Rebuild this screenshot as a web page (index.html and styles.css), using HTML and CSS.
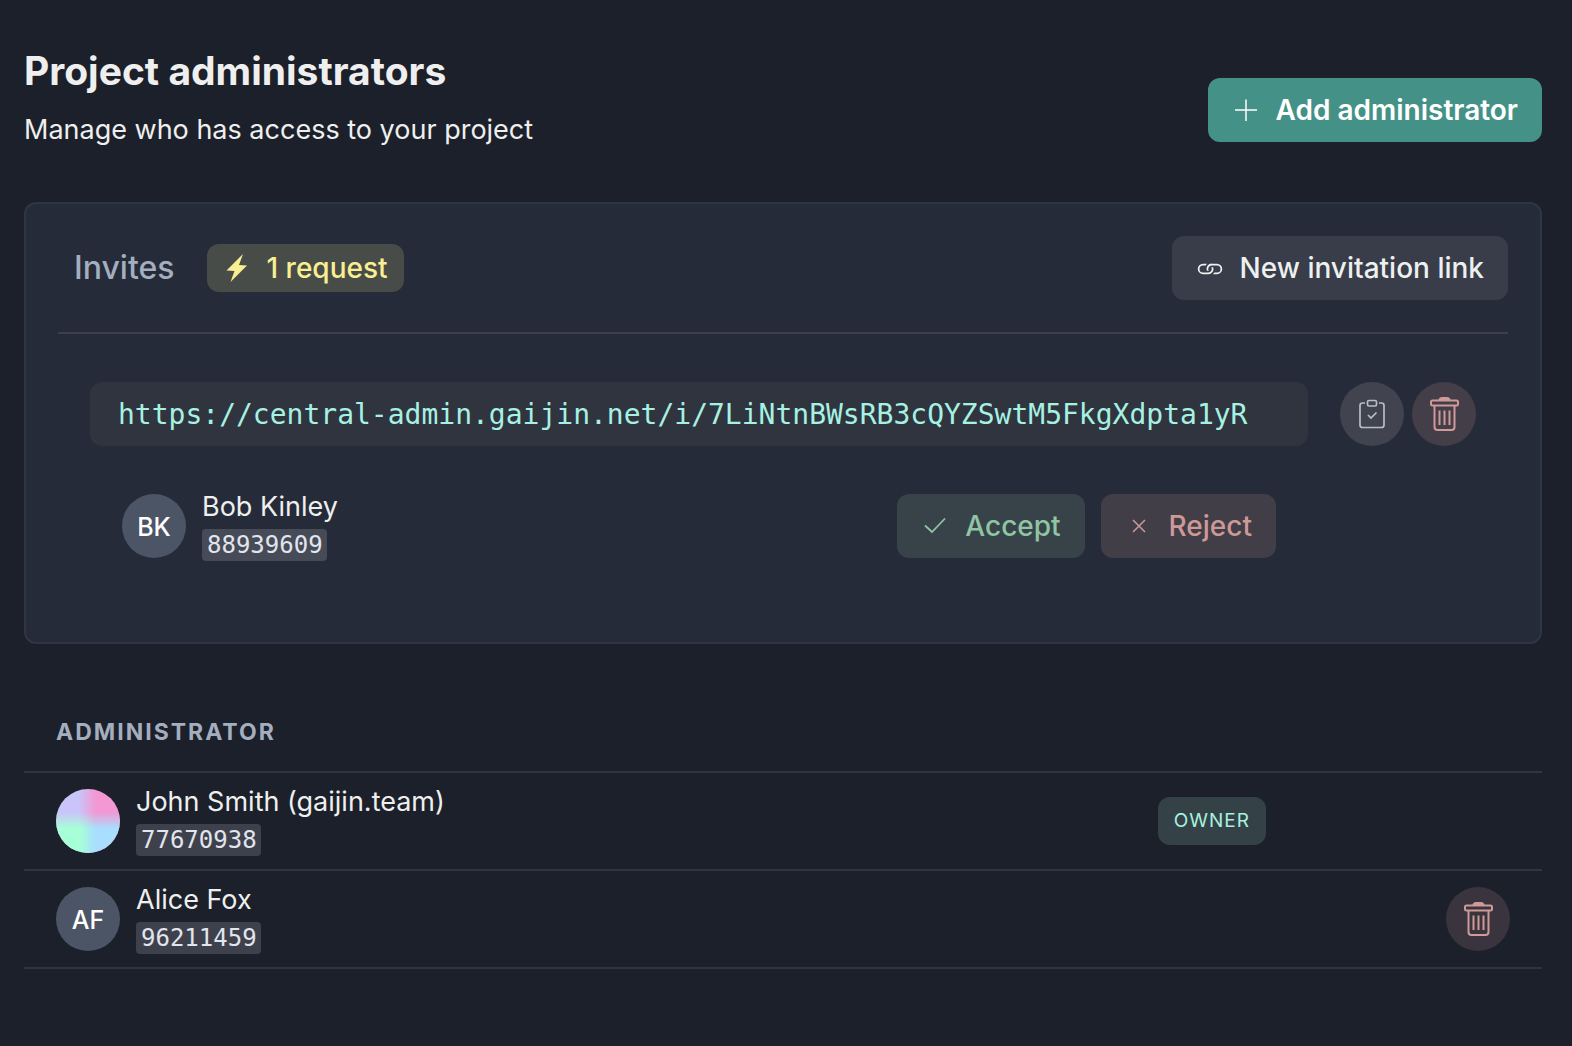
FILE: index.html
```html
<!DOCTYPE html>
<html lang="en">
<head>
<meta charset="utf-8">
<meta name="viewport" content="width=device-width, initial-scale=1">
<title>Project administrators</title>
<link rel="stylesheet" href="styles.css">
</head>
<body>
<svg class="sprite" aria-hidden="true">
  <symbol id="trash" viewBox="0 0 32 36">
    <path d="M11.500 4 Q12 2 14 2 H19 Q21 2 21.500 4 Z" fill="currentColor"/>
    <rect x="3" y="4.500" width="27" height="5" rx="1.500"/>
    <path d="M6.500 9.500 V31 Q6.500 34 9.500 34 H23.500 Q26.500 34 26.500 31 V9.500 M11.500 14.500 V29 M16.500 14.500 V29 M21.500 14.500 V29"/>
  </symbol>
</svg>
<main class="page">
  <header class="page-head">
    <div>
      <h1 class="title">Project administrators</h1>
      <p class="subtitle">Manage who has access to your project</p>
    </div>
    <button class="btn btn-primary" type="button">
      <svg class="icon" viewBox="0 0 28 28" aria-hidden="true"><path d="M14 3.500 V25 M3 14 H25" stroke-width="1.500"/></svg>
      Add administrator
    </button>
  </header>

  <section class="card">
    <div class="card-head">
      <h2 class="card-title">Invites</h2>
      <span class="badge badge-yellow">
        <svg class="icon" viewBox="0 0 28 28" aria-hidden="true"><path class="solid" d="M20 0 L3.500 16.500 L11.500 17 L7.500 28 L24 11.500 L16 11 Z"/></svg>
        1 request
      </span>
      <button class="btn btn-gray" type="button">
        <svg class="icon" viewBox="0 0 16 16" aria-hidden="true"><path class="solid" d="M6.354 5.500H4a3 3 0 0 0 0 6h3a3 3 0 0 0 2.830-4H9c-.086 0-.17.010-.25.031A2 2 0 0 1 7 10.500H4a2 2 0 1 1 0-4h1.535c.218-.376.495-.714.820-1z M9 5.500a3 3 0 0 0-2.830 4h1.098A2 2 0 0 1 9 6.500h3a2 2 0 1 1 0 4h-1.535a4.020 4.020 0 0 1-.82 1H12a3 3 0 1 0 0-6z"/></svg>
        New invitation link
      </button>
    </div>
    <div class="invite">
      <div class="invite-main">
        <code class="url">https://central-admin.gaijin.net/i/7LiNtnBWsRB3cQYZSwtM5FkgXdpta1yR</code>
        <div class="request">
          <div class="person">
            <span class="avatar">BK</span>
            <div class="person-info">
              <span class="name">Bob Kinley</span>
              <code class="uid">88939609</code>
            </div>
          </div>
          <div class="actions">
            <button class="btn btn-green" type="button">
              <svg class="icon" viewBox="0 0 28 28" aria-hidden="true"><path d="M4 13.500 L11 20 L24 6.500" stroke-width="1.800"/></svg>
              Accept
            </button>
            <button class="btn btn-red" type="button">
              <svg class="icon" viewBox="0 0 28 28" aria-hidden="true"><path d="M8 8 L20 20 M20 8 L8 20" stroke-width="1.500"/></svg>
              Reject
            </button>
          </div>
        </div>
      </div>
      <div class="invite-tools">
        <button class="round round-gray" type="button" aria-label="Copy link">
          <svg class="icon-tool" viewBox="0 0 32 36" aria-hidden="true"><path d="M9 7 H6.500 Q4 7 4 9.500 V29 Q4 31.500 6.500 31.500 H25.500 Q28 31.500 28 29 V9.500 Q28 7 25.500 7 H23 M12 19 L15 22 L20.500 16.500" stroke-width="1.700"/><rect x="11.500" y="4.500" width="9" height="5.500" rx="1.500" stroke-width="1.700"/></svg>
        </button>
        <button class="round round-red" type="button" aria-label="Delete link">
          <svg class="icon-tool" aria-hidden="true"><use href="#trash"/></svg>
        </button>
      </div>
    </div>
  </section>

  <table class="admins">
    <thead>
      <tr><th class="col-person" scope="col">Administrator</th><td></td><td class="col-tools"></td></tr>
    </thead>
    <tbody>
      <tr>
        <td>
          <div class="person">
            <span class="avatar avatar-gradient"></span>
            <div class="person-info">
              <span class="name">John Smith (gaijin.team)</span>
              <code class="uid">77670938</code>
            </div>
          </div>
        </td>
        <td><span class="badge badge-teal">OWNER</span></td>
        <td></td>
      </tr>
      <tr>
        <td>
          <div class="person">
            <span class="avatar">AF</span>
            <div class="person-info">
              <span class="name">Alice Fox</span>
              <code class="uid">96211459</code>
            </div>
          </div>
        </td>
        <td></td>
        <td class="col-tools">
          <button class="round round-red" type="button" aria-label="Remove Alice Fox">
            <svg class="icon-tool" aria-hidden="true"><use href="#trash"/></svg>
          </button>
        </td>
      </tr>
    </tbody>
  </table>
</main>
</body>
</html>
```
FILE: styles.css
```css
* {
  box-sizing: border-box;
}

body {
  margin: 0;
  background: #1c202a;
  color: #eeefee;
  font-family: Inter, "Liberation Sans", sans-serif;
  font-size: 28px;
  line-height: 40px;
}

h1,
h2,
p {
  margin: 0;
}

button {
  border: 0;
  font: inherit;
  cursor: pointer;
}

svg {
  fill: none;
  stroke: currentColor;
  stroke-width: 2;
}

.sprite {
  display: none;
}

.page {
  padding: 46px 30px 48px 24px;
}

.page-head {
  display: flex;
  align-items: flex-end;
  justify-content: space-between;
  padding-bottom: 52px;
}

.page-head .btn {
  margin-bottom: 8px;
}

.title {
  font-size: 39px;
  line-height: 50px;
  font-weight: 700;
}

.subtitle {
  padding-top: 14px;
  font-size: 27px;
  line-height: 40px;
}

.btn {
  display: inline-flex;
  align-items: center;
  gap: 16px;
  height: 64px;
  padding: 0 24px;
  border-radius: 12px;
  font-weight: 500;
  white-space: nowrap;
}

.btn-primary {
  background: #449287;
  color: #ffffff;
  font-weight: 600;
}

.btn-gray {
  margin-left: auto;
  background: #383d49;
  color: #eeefef;
}

.btn-green {
  background: #384349;
  color: #90c5a3;
}

.btn-red {
  background: #423e48;
  color: #cd9997;
}

.icon {
  width: 28px;
  height: 28px;
}

.solid {
  fill: currentColor;
  stroke: none;
}

.card {
  padding: 32px 32px 84px;
  border: 2px solid #2e3546;
  border-radius: 12px;
  background: #262b39;
}

.card-head {
  display: flex;
  align-items: center;
  gap: 32px;
  padding: 0 0 32px 16px;
  border-bottom: 2px solid #3c404c;
}

.card-title {
  color: #a3aebf;
  font-size: 32px;
  font-weight: 500;
}

.badge {
  display: inline-flex;
  align-items: center;
  gap: 16px;
  height: 48px;
  padding: 0 16px;
  border-radius: 12px;
}

.badge-yellow {
  background: #484c48;
  color: #faee92;
  font-weight: 500;
}

.badge-teal {
  background: #344248;
  color: #a7f1de;
  font-size: 19px;
  letter-spacing: 1px;
  vertical-align: middle;
}

.invite {
  display: flex;
  gap: 32px;
  padding: 48px 32px 0;
}

.invite-main {
  flex: 1;
  min-width: 0;
}

.url {
  display: block;
  padding: 13px 28px 11px;
  border-radius: 12px;
  background: #2f343f;
  color: #a7f1e2;
  overflow-wrap: anywhere;
}

code {
  font-family: "DejaVu Sans Mono", "Liberation Mono", monospace;
}

.request {
  display: flex;
  align-items: center;
  justify-content: space-between;
  padding: 48px 32px 0;
}

.person {
  display: flex;
  align-items: center;
  gap: 16px;
  height: 64px;
}

.avatar {
  display: grid;
  place-items: center;
  width: 64px;
  height: 64px;
  padding-top: 2px;
  border-radius: 50%;
  background: #4c5566;
  color: #ffffff;
  font-size: 25px;
  font-weight: 500;
}

.avatar-gradient {
  padding: 0;
  background: linear-gradient(to right, #c9c4fa 36%, #f398d3 62%);
  overflow: hidden;
}

.avatar-gradient::after {
  content: "";
  width: 64px;
  height: 64px;
  background: linear-gradient(to right, #a7ffd8 38%, #a9defe 62%);
  mask-image: linear-gradient(to bottom, transparent 36%, #000000 62%);
}

.person-info {
  display: flex;
  flex-direction: column;
  align-items: flex-start;
  gap: 6px;
}

.name {
  font-size: 27px;
  line-height: 32px;
}

.uid {
  padding: 0 4px 0 5px;
  border-radius: 4px;
  background: #3e414c;
  color: #e0e5ee;
  font-size: 24px;
  line-height: 32px;
}

.request .uid {
  background: #474b57;
}

.actions,
.invite-tools {
  display: flex;
  gap: 16px;
}

.invite-tools {
  gap: 8px;
}

.round {
  display: inline-grid;
  place-items: center;
  width: 64px;
  height: 64px;
  padding: 0;
  border-radius: 50%;
}

.round-gray {
  background: #41444f;
  color: #b9bdca;
}

.round-red {
  background: #433e48;
  color: #d09a99;
}

.admins .round-red {
  background: #39343d;
}

.icon-tool {
  width: 32px;
  height: 36px;
}

.admins {
  width: 100%;
  margin-top: 56px;
  border-collapse: separate;
  border-spacing: 0;
}

.admins th,
.admins td {
  padding: 16px 32px;
  border-bottom: 2px solid #2d3545;
  line-height: 0;
}

.admins th {
  padding: 20px 32px 27px;
  color: #a3aebf;
  font-size: 23px;
  line-height: 24px;
  font-weight: 700;
  letter-spacing: 2px;
  text-align: left;
  text-transform: uppercase;
}

.col-person {
  width: 100%;
}

.admins .col-tools {
  min-width: 244px;
  text-align: right;
}
```
